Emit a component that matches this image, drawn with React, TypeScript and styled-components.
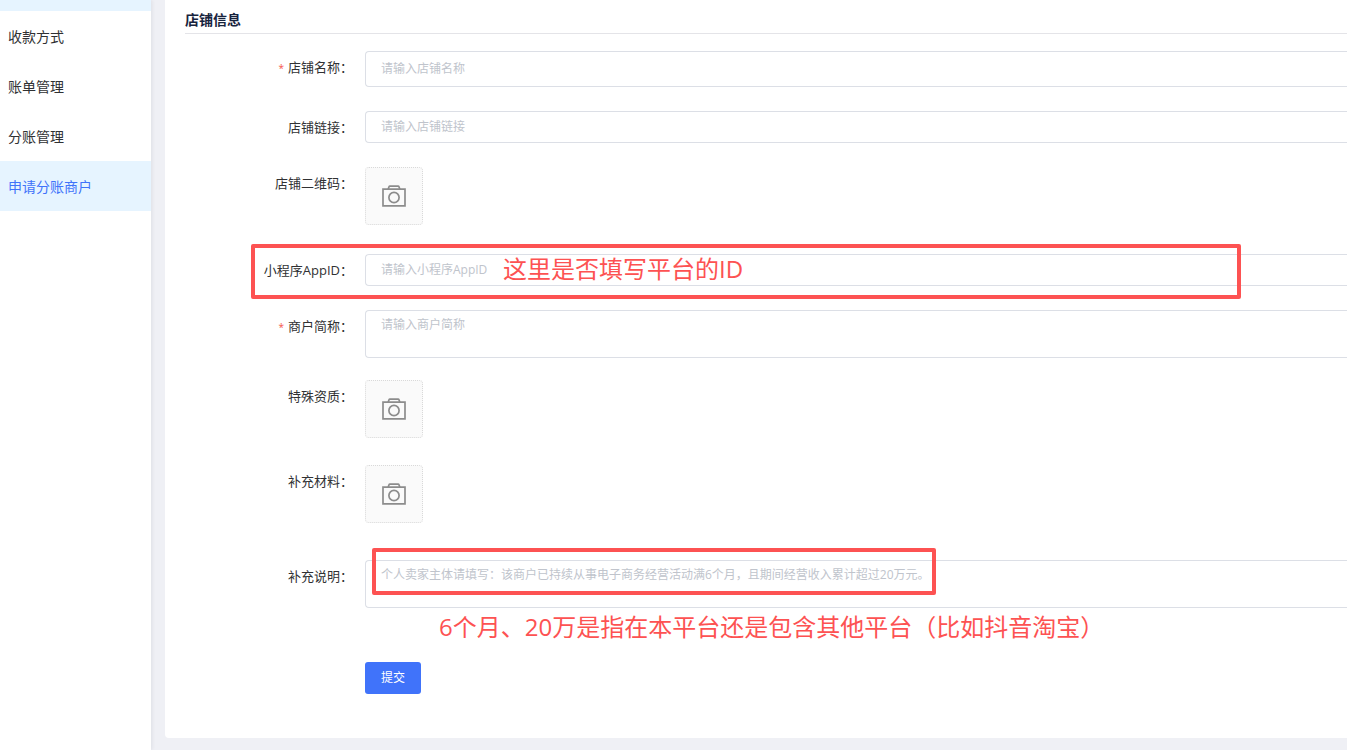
import React from "react";
import styled, { createGlobalStyle, css } from "styled-components";

const GlobalStyle = createGlobalStyle`
  * { box-sizing: border-box; }
  body {
    margin: 0;
    background: #eff0f5;
    color: #303133;
    font-family: "Open Sans", "Noto Sans CJK SC", sans-serif;
    overflow-x: hidden;
  }
  button, input, textarea { font-family: inherit; }
`;

const Page = styled.div`
  display: flex;
  min-height: 100vh;
`;

const Sidebar = styled.nav`
  position: relative;
  flex: 0 0 151px;
  background: #fff;
  box-shadow: 1px 0 4px rgba(0, 21, 41, 0.08);
`;

const PreviousGroup = styled.div`
  height: 11px;
  background: #e6f4ff;
`;

const MenuLink = styled.a<{ $active?: boolean }>`
  display: flex;
  align-items: center;
  height: 50px;
  padding: 2px 8px 0;
  font-size: 14px;
  line-height: 20px;
  text-decoration: none;
  color: ${(p) => (p.$active ? "#4073fa" : "#303133")};
  background: ${(p) => (p.$active ? "#e6f4ff" : "transparent")};
`;

const Main = styled.main`
  flex: 1;
  min-width: 0;
  padding: 0 0 12px 14px;
`;

const Panel = styled.form`
  padding: 0 0 44px 20px;
  background: #fff;
  border-radius: 0 0 0 4px;
`;

const SectionTitle = styled.h2`
  margin: 0 0 17px;
  padding: 10px 0 3px;
  border-bottom: 1px solid #e4e4e8;
  color: #17233d;
  font-size: 14px;
  line-height: 20px;
  font-weight: 700;
`;

const FormRow = styled.div<{ $gap?: number }>`
  position: relative;
  display: flex;
  align-items: flex-start;
  margin-bottom: ${(p) => p.$gap ?? 24}px;
`;

const Label = styled.label`
  flex: 0 0 180px;
  padding-right: 12px;
  text-align: right;
  font-size: 13px;
  line-height: 32px;
  white-space: nowrap;
`;

const Required = styled.span`
  margin-right: 4px;
  color: #f5554a;
  font-size: 10px;
`;

const control = css`
  flex: 1;
  min-width: 0;
  border: 1px solid #dcdfe6;
  border-right: 0;
  border-radius: 4px 0 0 4px;
  background: #fff;
  color: #606266;
  font-size: 12px;
  outline: none;
  &::placeholder { color: #c0c4cc; opacity: 1; }
`;

const TextInput = styled.input<{ $tall?: boolean }>`
  ${control}
  height: ${(p) => (p.$tall ? 36 : 32)}px;
  padding: 0 15px 1px;
`;

const TextArea = styled.textarea`
  ${control}
  height: 48px;
  padding: 5px 15px;
  line-height: 18px;
  resize: none;
`;

const UploadButton = styled.button`
  display: flex;
  align-items: center;
  justify-content: center;
  width: 58px;
  height: 58px;
  padding: 0 0 1px;
  border: 1px dotted #d9d9d9;
  border-radius: 4px;
  background: #fafafa;
  color: #8c8c8c;
`;

const SubmitButton = styled.button`
  margin-left: 180px;
  height: 32px;
  padding: 0 16px;
  border: 0;
  border-radius: 3px;
  background: #4073fa;
  color: #fff;
  font-size: 12px;
  line-height: 32px;
`;

const Highlight = styled.div<{ $left: number; $top: number; $width: number; $height: number }>`
  position: absolute;
  left: ${(p) => p.$left}px;
  top: ${(p) => p.$top}px;
  width: ${(p) => p.$width}px;
  height: ${(p) => p.$height}px;
  border: 4px solid #fd5252;
  border-radius: 2px;
  pointer-events: none;
`;

const Note = styled.p<{ $left: number; $top: number }>`
  position: absolute;
  left: ${(p) => p.$left}px;
  top: ${(p) => p.$top}px;
  margin: 0;
  color: #fd5252;
  font-size: 24px;
  line-height: 32px;
  white-space: nowrap;
  pointer-events: none;
`;

const CameraIcon = () => (
  <svg width="24" height="22" viewBox="0 0 24 22" fill="none" stroke="currentColor" strokeWidth="1.7" aria-hidden="true">
    <path d="M1 4.2h22v16.6H1z" />
    <path d="M6.2 4.2 6.9 2q.3-.8 1.1-.8h8q.8 0 1.1.8l.7 2.2" />
    <circle cx="12" cy="12.5" r="5.1" />
  </svg>
);

const Upload = ({ id, label, gap }: { id: string; label: string; gap: number }) => (
  <FormRow $gap={gap}>
    <Label htmlFor={id}>{label}：</Label>
    <UploadButton id={id} type="button">
      <CameraIcon />
    </UploadButton>
  </FormRow>
);

const menu = ["收款方式", "账单管理", "分账管理", "申请分账商户"];

export default function App() {
  return (
    <>
      <GlobalStyle />
      <Page>
        <Sidebar>
          <PreviousGroup />
          {menu.map((item) => (
            <MenuLink key={item} href="#" $active={item === "申请分账商户"}>
              {item}
            </MenuLink>
          ))}
        </Sidebar>
        <Main>
          <Panel onSubmit={(e) => e.preventDefault()}>
            <SectionTitle>店铺信息</SectionTitle>
            <FormRow>
              <Label htmlFor="shop-name">
                <Required>*</Required>店铺名称：
              </Label>
              <TextInput id="shop-name" $tall placeholder="请输入店铺名称" />
            </FormRow>
            <FormRow>
              <Label htmlFor="shop-link">店铺链接：</Label>
              <TextInput id="shop-link" placeholder="请输入店铺链接" />
            </FormRow>
            <Upload id="shop-qr" label="店铺二维码" gap={29} />
            <FormRow>
              <Label htmlFor="app-id">小程序AppID：</Label>
              <TextInput id="app-id" placeholder="请输入小程序AppID" />
              <Highlight $left={66} $top={-10} $width={990} $height={55} />
              <Note $left={318} $top={-1}>这里是否填写平台的ID</Note>
            </FormRow>
            <FormRow $gap={22}>
              <Label htmlFor="short-name">
                <Required>*</Required>商户简称：
              </Label>
              <TextArea id="short-name" placeholder="请输入商户简称" />
            </FormRow>
            <Upload id="qualification" label="特殊资质" gap={27} />
            <Upload id="material" label="补充材料" gap={37} />
            <FormRow $gap={54}>
              <Label htmlFor="explain">补充说明：</Label>
              <TextArea
                id="explain"
                placeholder="个人卖家主体请填写：该商户已持续从事电子商务经营活动满6个月，且期间经营收入累计超过20万元。"
              />
              <Highlight $left={187} $top={-12} $width={564} $height={47} />
              <Note $left={254} $top={51}>6个月、20万是指在本平台还是包含其他平台（比如抖音淘宝）</Note>
            </FormRow>
            <SubmitButton type="submit">提交</SubmitButton>
          </Panel>
        </Main>
      </Page>
    </>
  );
}
